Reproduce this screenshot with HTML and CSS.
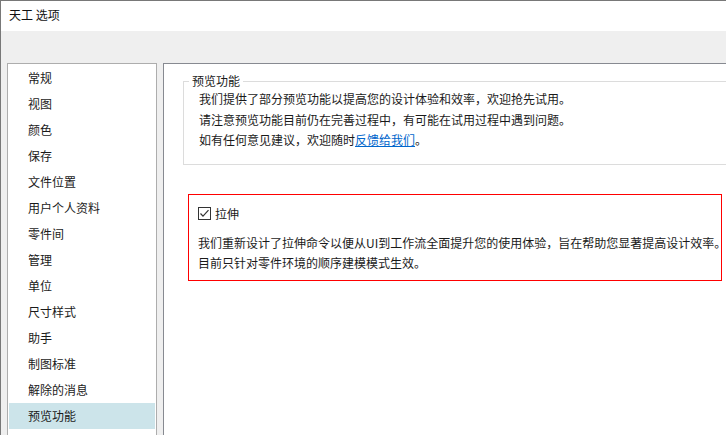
FILE: index.html
```html
<!DOCTYPE html>
<html lang="zh-CN">
<head>
<meta charset="utf-8">
<title>天工 选项</title>
<link rel="stylesheet" href="styles.css">
</head>
<body>
<div class="window">
  <div class="titlebar">天工 选项</div>
  <div class="main">
    <ul class="sidebar">
      <li class="item">常规</li>
      <li class="item">视图</li>
      <li class="item">颜色</li>
      <li class="item">保存</li>
      <li class="item">文件位置</li>
      <li class="item">用户个人资料</li>
      <li class="item">零件间</li>
      <li class="item">管理</li>
      <li class="item">单位</li>
      <li class="item">尺寸样式</li>
      <li class="item">助手</li>
      <li class="item">制图标准</li>
      <li class="item">解除的消息</li>
      <li class="item selected">预览功能</li>
    </ul>
    <div class="content">
      <fieldset class="group">
        <legend class="group-title">预览功能</legend>
        <p class="line">我们提供了部分预览功能以提高您的设计体验和效率，欢迎抢先试用。</p>
        <p class="line">请注意预览功能目前仍在完善过程中，有可能在试用过程中遇到问题。</p>
        <p class="line">如有任何意见建议，欢迎随时<a class="link" href="#">反馈给我们</a>。</p>
      </fieldset>
      <div class="feature">
        <label class="check-row">
          <svg class="checkbox" width="13" height="13" viewBox="0 0 13 13">
            <rect x="0.5" y="0.5" width="12" height="12" fill="#fff" stroke="#333" stroke-width="1"/>
            <polyline points="2.5,6.5 5,9.2 10.5,3.2" fill="none" stroke="#333" stroke-width="1.2"/>
          </svg>
          <span class="check-label">拉伸</span>
        </label>
        <p class="desc">我们重新设计了拉伸命令以便从UI到工作流全面提升您的使用体验，旨在帮助您显著提高设计效率。</p>
        <p class="desc">目前只针对零件环境的顺序建模模式生效。</p>
      </div>
    </div>
  </div>
</div>
</body>
</html>
```
FILE: styles.css
```css
* { box-sizing: border-box; }
html, body {
  margin: 0;
  padding: 0;
  width: 726px;
  height: 435px;
  overflow: hidden;
}
body {
  font-family: "Noto Sans CJK SC", "Noto Sans", "Liberation Sans", sans-serif;
  font-size: 12px;
  color: #1a1a1a;
}
.window {
  width: 726px;
  height: 435px;
  border-top: 1px solid #787878;
  border-left: 1px solid #787878;
  background: #efefef;
  display: flex;
  flex-direction: column;
}
.titlebar {
  height: 30px;
  line-height: 28px;
  padding-left: 8px;
  background: #ffffff;
  font-size: 12px;
  color: #111;
}
.main {
  flex: 1;
  display: flex;
  gap: 6px;
  padding: 32px 0 0 6px;
  min-height: 0;
}
.sidebar {
  list-style: none;
  margin: 0;
  width: 150px;
  padding: 1px;
  border: 1px solid #adadad;
  border-bottom: none;
  background: #ffffff;
}
.item {
  height: 26px;
  line-height: 26px;
  padding-left: 19px;
}
.item.selected {
  background: #cce4ea;
}
.content {
  flex: 1;
  background: #ffffff;
  border-top: 1px solid #878a91;
  border-left: 1px solid #878a91;
  overflow: hidden;
  padding: 0;
}
.group {
  margin: 9px -30px 0 19px;
  padding: 0 0 13px 15px;
  border: 1px solid #dcdcdc;
  min-width: 0;
}
.group-title {
  margin-left: -10px;
  padding: 0 3px;
  line-height: 16px;
  font-size: 12px;
}
.line {
  margin: 0;
  line-height: 20.5px;
  white-space: nowrap;
}
.link {
  color: #0066cc;
  text-decoration: underline;
}
.feature {
  margin: 29px 4px 0 24px;
  border: 1px solid #ff0000;
  padding: 12px 0 7px 9px;
}
.check-row {
  display: flex;
  align-items: center;
  gap: 4px;
  height: 13px;
}
.checkbox {
  display: block;
  flex: none;
}
.check-label {
  line-height: 13px;
}
.desc {
  margin: 0;
  line-height: 20px;
  white-space: nowrap;
}
.check-row + .desc {
  margin-top: 13px;
}
```
